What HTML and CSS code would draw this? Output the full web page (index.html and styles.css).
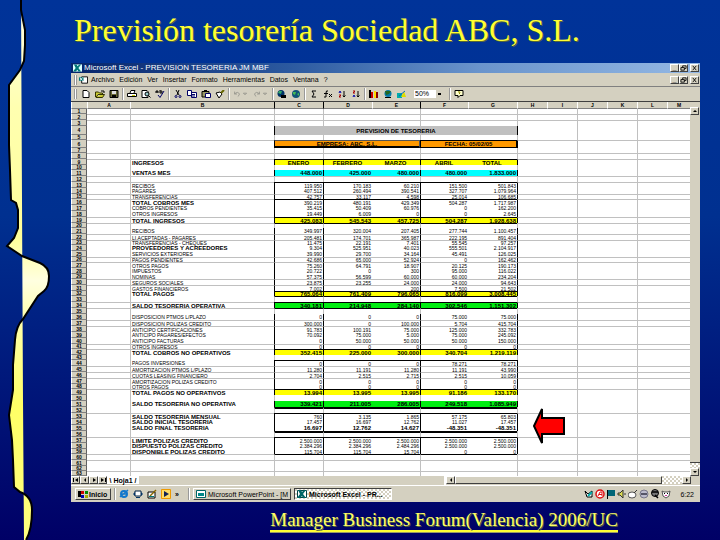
FILE: index.html
```
<!DOCTYPE html>
<html lang="es">
<head>
    <meta charset="UTF-8">
    <meta name="viewport" content="width=device-width, initial-scale=1.0">
    <title>Previsión tesorería Sociedad ABC, S.L.</title>
    <link rel="stylesheet" href="styles.css">
</head>
<body>
    <svg class="ribbon" viewBox="0 0 56 540" preserveAspectRatio="none" aria-hidden="true">
        <defs>
            <linearGradient id="ribbonFill" x1="0" y1="0" x2="0" y2="1">
                <stop offset="0" stop-color="#ffffe8"/>
                <stop offset="0.2" stop-color="#ffffb0"/>
                <stop offset="0.44" stop-color="#ffff99"/>
                <stop offset="0.52" stop-color="#ffffe0"/>
                <stop offset="0.6" stop-color="#ffffa8"/>
                <stop offset="0.75" stop-color="#ffff66"/>
                <stop offset="1" stop-color="#ffff80"/>
            </linearGradient>
        </defs>
        <path fill="url(#ribbonFill)" d="M21 0V10L25 30L25 45L24 61L20 70L9 85V145L10 170L11 200L16 203L18 210L18 228L14 238L7 246L22 256L40 263Q49 267 49 276Q49 287 44 291L38 296L23 319Q16 326 15 340L13 365V390L9 415L12 440L13 460L14 487L20 492Q32 496 32 510Q32 530 26 540H24L23 400L22 200Z"/>
        <path fill="none" stroke="#000" stroke-width="2" d="M21 0V10L25 30L25 45L24 61L20 70L9 85V145L10 170L11 200L16 203L18 210L18 228L14 238L7 246L22 256L40 263Q49 267 49 276Q49 287 44 291L38 296L23 319Q16 326 15 340L13 365V390L9 415L12 440L13 460L14 487L20 492Q32 496 32 510Q32 530 26 540"/>
    </svg>

    <main class="slide">
        <h1>Previsión tesorería Sociedad ABC, S.L.</h1>

        <div class="window">
            <div class="title-bar">
                <svg class="app-icon" viewBox="0 0 10 8"><path fill="#dff" d="M0 0h10v8H0z"/><path fill="#077" d="M1 0h3l1 2 2-2h2L6 4l3 4H6L5 6 3 8H0l3-4z"/></svg>
                <span class="title-text">Microsoft Excel - PREVISION TESORERIA JM MBF</span>
                <div class="win-buttons">
                    <button aria-label="Minimizar">_</button>
                    <button aria-label="Restaurar"><svg viewBox="0 0 8 7"><path class="line" d="M3 3V1h4v3H5M1 3h4v3H1z"/></svg></button>
                    <button aria-label="Cerrar"><svg viewBox="0 0 8 7"><path class="line" d="M2 1l4 5M6 1L2 6"/></svg></button>
                </div>
            </div>

            <div class="menu-bar">
                <span class="grip"></span>
                <svg class="app-icon" viewBox="0 0 10 8"><path fill="#fff" stroke="#000" d="M3 .5h6.500v7H3z"/><path fill="#077" d="M0 1h5v4H0z"/><path stroke="#fff" d="M1 1.500l3 3M4 1.500l-3 3"/></svg>
                <button>Archivo</button>
                <button>Edición</button>
                <button>Ver</button>
                <button>Insertar</button>
                <button>Formato</button>
                <button>Herramientas</button>
                <button>Datos</button>
                <button>Ventana</button>
                <button>?</button>
                <div class="win-buttons">
                    <button aria-label="Minimizar libro">_</button>
                    <button aria-label="Restaurar libro"><svg viewBox="0 0 8 7"><path class="line" d="M3 3V1h4v3H5M1 3h4v3H1z"/></svg></button>
                    <button aria-label="Cerrar libro"><svg viewBox="0 0 8 7"><path class="line" d="M2 1l4 5M6 1L2 6"/></svg></button>
                </div>
            </div>

            <div class="toolbar">
                <span class="grip"></span>
                <button aria-label="Nuevo"><svg viewBox="0 0 10 8"><path fill="#fff" stroke="#000" d="M2 .5h4l2 2v5H2z"/></svg></button>
                <button aria-label="Abrir"><svg viewBox="0 0 10 8"><path fill="#cc3" stroke="#330" d="M.5 7V2h3l1 1h3v1.500H3L1 7.500h6.500l2-3H7"/><path class="line" d="M6 1h3v2"/></svg></button>
                <button aria-label="Guardar"><svg viewBox="0 0 10 8"><path fill="#663" stroke="#000" d="M1 .5h8v7H1z"/><path fill="#ddd" d="M3 1h4v3H3z"/><path fill="#000" d="M3 5h4v2H3z"/></svg></button>
                <span class="divider"></span>
                <button aria-label="Imprimir"><svg viewBox="0 0 10 8"><path fill="#fff" stroke="#000" d="M3 3l1-2.500h4L7 3M.5 3.500h9v3h-9z"/><path stroke="#cc0" d="M5 5.500h3"/></svg></button>
                <button aria-label="Vista preliminar"><svg viewBox="0 0 10 8"><path fill="#fff" stroke="#000" d="M1 .5h5l1 1v6H1z"/><circle cx="6" cy="4" r="2" fill="#9cc" stroke="#000"/><path class="line" d="M7.500 5.500l2 2"/></svg></button>
                <button aria-label="Ortografía"><svg viewBox="0 0 10 8"><path class="line" d="M1 3V1h2v2M1 2h2M5 0v3h2V1H5"/><path fill="none" stroke="#006" d="M3 5l2 2.500L9 1"/></svg></button>
                <span class="divider"></span>
                <button aria-label="Cortar"><svg viewBox="0 0 10 8"><path class="line" d="M3 0l3 5M6 0L4 5"/><circle cx="3" cy="6.500" r="1" fill="none" stroke="#006"/><circle cx="7" cy="6.500" r="1" fill="none" stroke="#006"/></svg></button>
                <button aria-label="Copiar"><svg viewBox="0 0 10 8"><path fill="#fff" stroke="#006" d="M.5.5h4v5h-4zM4.500 2.500h5v5h-5z"/><path stroke="#006" d="M5 4.500h3M5 6h3"/></svg></button>
                <button aria-label="Pegar"><svg viewBox="0 0 10 8"><path fill="#996" stroke="#000" d="M1 1.500h7v5.500H1z"/><path fill="#fff" stroke="#006" d="M4.500 3.500h5v4h-5z"/><path stroke="#000" d="M3 .5h3"/></svg></button>
                <button aria-label="Copiar formato"><svg viewBox="0 0 10 8"><path fill="#fff" stroke="#000" d="M1 3l4-1 2 2-3 4z"/><path stroke="#660" stroke-width="2" d="M6 3l3-3"/></svg></button>
                <span class="divider"></span>
                <button class="wide" disabled aria-label="Deshacer"><svg viewBox="0 0 20 8"><path class="off" d="M2 1v3h3M2 4q4-4 6 0q0 2-2 3M13 3h4l-2 2z"/></svg></button>
                <button class="wide" disabled aria-label="Rehacer"><svg viewBox="0 0 20 8"><path class="off" d="M8 1v3H5M8 4Q4 0 2 4q0 2 2 3M13 3h4l-2 2z"/></svg></button>
                <span class="divider"></span>
                <button aria-label="Hipervínculo"><svg viewBox="0 0 10 8"><circle cx="4" cy="3.500" r="3.500" fill="#036"/><path fill="#3a6" d="M2 1h3L4 4 1 3z"/><path fill="#000" d="M4 5h5v3H4z"/></svg></button>
                <button aria-label="Web"><svg viewBox="0 0 10 8"><circle cx="5" cy="4" r="4" fill="#157"/><path fill="#4b5" d="M2 2h3L4 5 2 4zM6 4l2-1v3z"/></svg></button>
                <span class="divider"></span>
                <button aria-label="Autosuma"><svg viewBox="0 0 10 8"><path class="line" d="M7 1H3l2 3-2 3h4"/></svg></button>
                <button aria-label="Pegar función"><svg viewBox="0 0 10 8"><path class="line" d="M5 1Q3 0 3 3v4H1M1 3.500h4M6 4l3 3M9 4L6 7"/></svg></button>
                <button aria-label="Orden ascendente"><svg viewBox="0 0 10 8"><path stroke="#00a" fill="none" d="M2 3l1-2 1 2"/><path stroke="#a00" fill="none" d="M2 5h2L2 7h2"/><path class="line" d="M7 1v6M6 5.500l1 1.500 1.500-1.500"/></svg></button>
                <button aria-label="Orden descendente"><svg viewBox="0 0 10 8"><path stroke="#a00" fill="none" d="M2 1h2L2 3h2"/><path stroke="#00a" fill="none" d="M2 7l1-2 1 2"/><path class="line" d="M7 1v6M6 5.500l1 1.500 1.500-1.500"/></svg></button>
                <span class="divider"></span>
                <button aria-label="Gráficos"><svg viewBox="0 0 10 8"><path fill="#000" d="M0 0h2v8H0z"/><path fill="#c00" d="M2 2h2v6H2z"/><path fill="#fd0" d="M5 1h2v7H5z"/><path fill="#800" d="M7 2h2v6H7z"/></svg></button>
                <button aria-label="Mapa"><svg viewBox="0 0 10 8"><circle cx="5" cy="3.500" r="3.500" fill="#07a"/><path fill="#262" d="M2 1h6L6 4 3 5z"/><path stroke="#000" d="M2 7.500h6"/></svg></button>
                <button aria-label="Dibujo"><svg viewBox="0 0 10 8"><path fill="#0aa" d="M0 3h5v5H0z"/><path fill="#dd0" d="M4 7l3-6 2 6z"/><path stroke="#06c" d="M2 6l6-5"/></svg></button>
                <select aria-label="Zoom">
                    <option>50%</option>
                </select>
                <span class="divider"></span>
                <button aria-label="Ayuda"><svg viewBox="0 0 10 8"><path fill="#ffc" stroke="#000" d="M1 .5h8v5H6L4 7.500V5.500H1z"/><path stroke="#880" fill="none" d="M4 2q2-1 2 1L5 4"/></svg></button>
            </div>

            <div class="sheet">
                <table>
                    <colgroup>
                        <col class="col-head">
                        <col class="col-a">
                        <col class="col-b">
                        <col class="col-num" span="2">
                        <col class="col-mid" span="2">
                        <col class="col-num">
                        <col class="col-empty" span="5">
                        <col>
                    </colgroup>
                    <thead id="columns"></thead>
                    <tbody id="rows"></tbody>
                </table>
                <div class="scroll-v">
                    <button aria-label="Subir"><svg viewBox="0 0 8 6"><path d="M4 2l2 2H2z"/></svg></button>
                    <div class="track"></div>
                    <div class="checker"></div>
                    <button aria-label="Bajar"><svg viewBox="0 0 8 6"><path d="M4 4L2 2h4z"/></svg></button>
                </div>
                <svg class="arrow" viewBox="0 0 34 40"><path fill="#f00" stroke="#000" stroke-width="2" d="M2 20L10 3V12H32V28H10V37z"/></svg>
            </div>

            <div class="tabs">
                <button aria-label="Primera hoja"><svg viewBox="0 0 8 6"><path d="M1 1h1v4H1zM6 1v4L3 3z"/></svg></button>
                <button aria-label="Hoja anterior"><svg viewBox="0 0 8 6"><path d="M5 1v4L3 3z"/></svg></button>
                <button aria-label="Hoja siguiente"><svg viewBox="0 0 8 6"><path d="M3 1v4l3-2z"/></svg></button>
                <button aria-label="Última hoja"><svg viewBox="0 0 8 6"><path d="M6 1h1v4H6zM2 1v4l3-2z"/></svg></button>
                <button class="tab">\ Hoja1 /</button>
                <div class="scroll-h">
                    <button aria-label="Izquierda"><svg viewBox="0 0 8 6"><path d="M5 1v4L3 3z"/></svg></button>
                    <div class="thumb"></div>
                    <div class="checker"></div>
                    <button aria-label="Derecha"><svg viewBox="0 0 8 6"><path d="M3 1v4l2-2z"/></svg></button>
                </div>
            </div>

            <div class="taskbar">
                <button class="start"><svg viewBox="0 0 10 8"><path d="M0 1h3v6H0z"/><path fill="#c00" d="M3 1h3v3H3z"/><path fill="#080" d="M7 1h3v3H7z"/><path fill="#00a" d="M3 5h3v3H3z"/><path fill="#aa0" d="M7 5h3v3H7z"/></svg>Inicio</button>
                <span class="divider"></span>
                <div class="quick">
                    <svg viewBox="0 0 10 10"><circle cx="5" cy="5" r="3" fill="none" stroke="#17c" stroke-width="2"/><path stroke="#17c" stroke-width="1.500" d="M3 5h5M1 8L9 1"/></svg>
                    <svg viewBox="0 0 10 10"><path fill="#fff" stroke="#024" d="M2 2h6v5H2z"/><path fill="#036" d="M0 5l2-2v4zM10 5L8 3v4zM3 8h4v1H3z"/></svg>
                    <svg viewBox="0 0 10 10"><path fill="#fff" stroke="#000" d="M1 3h7v6H1z"/><path stroke="#860" stroke-width="1.500" d="M3 7l6-6"/><path stroke="#077" d="M2 7.500h5"/></svg>
                    <svg viewBox="0 0 10 10"><path fill="#fd6" stroke="#e90" d="M.5.5h9v9h-9z"/><path fill="#125" d="M3 2l5 3-5 3z"/></svg>
                    <span>»</span>
                </div>
                <span class="divider"></span>
                <button class="task"><svg viewBox="0 0 10 8"><path fill="#fff" stroke="#066" d="M.5.5h9v7h-9z"/><path fill="#088" d="M2 3h6v3H2z"/></svg>Microsoft PowerPoint - [M</button>
                <button class="task active"><svg viewBox="0 0 10 8"><path fill="#fff" stroke="#044" d="M.5.5h9v7h-9z"/><path fill="#066" d="M1 0h3l1 2 2-2h2L6 4l3 4H6L5 6 3 8H0l3-4z"/></svg>Microsoft Excel - PR...</button>
                <div class="tray">
                    <svg viewBox="0 0 10 10"><path fill="#fff" stroke="#000" d="M1 2l3 3 4-3v6H3z"/><path stroke="#0aa" stroke-width="2" d="M4 7l4-4"/></svg>
                    <svg viewBox="0 0 10 10"><circle cx="5" cy="5" r="4" fill="#fff" stroke="#d11" stroke-width="1.500"/><path fill="none" stroke="#d11" d="M3 7l2-4h2v4M4 5.500h3"/></svg>
                    <svg viewBox="0 0 10 10"><path fill="#067" d="M2 1h7v6H2z"/><path stroke="#000" d="M1.500 1v9"/></svg>
                    <svg viewBox="0 0 10 10"><path fill="#dd5" stroke="#333" d="M1 4h2l3-3v8L3 6H1z"/><path stroke="#333" d="M8 4v2"/></svg>
                    <svg viewBox="0 0 10 10"><ellipse cx="4" cy="6" rx="4" ry="3" fill="#fff" stroke="#555"/><path stroke="#333" d="M6 4l3-3"/></svg>
                    <svg viewBox="0 0 10 10"><circle cx="5" cy="5" r="4" fill="#bbc" stroke="#778"/><path stroke="#556" stroke-width="2" d="M2 5h6"/></svg>
                    <svg viewBox="0 0 10 10"><circle cx="5" cy="4" r="3.500" fill="#777" stroke="#000"/><path stroke="#000" stroke-width="1.500" d="M2 3h6M5 6l3 3"/></svg>
                    <svg viewBox="0 0 10 10"><path fill="#fff" stroke="#555" d="M1 2l2 1h4l2-1-1 5-3 2-3-2z"/><path fill="#000" d="M3 4h1v1H3zM6 4h1v1H6z"/><path fill="#c39" d="M4 6h2v1H4z"/></svg>
                    <span class="clock">6:22</span>
                </div>
            </div>
        </div>

        <footer><span>Manager Business Forum(Valencia) 2006/UC</span></footer>
    </main>

    <script src="script.js"></script>
</body>
</html>
```
FILE: styles.css
```
* {
    margin: 0;
    padding: 0;
    box-sizing: border-box;
}

body {
    position: relative;
    min-height: 100vh;
    background: linear-gradient(#003399, #003090 40%, #000066);
    font-family: "Liberation Sans", Arial, sans-serif;
    font-size: 7px;
    color: #000;
}

.ribbon {
    position: absolute;
    top: 0;
    left: 0;
    width: 56px;
    height: 100%;
}

.slide {
    padding: 12px 20px 0 71px;
}

h1 {
    margin: 0 0 14px 3px;
    font-family: "Liberation Serif", "Times New Roman", serif;
    font-size: 32px;
    font-weight: normal;
    line-height: 37px;
    color: #ffff33;
    text-shadow: 1px 1px 0 #55663a;
}

button,
select {
    border: 0;
    border-radius: 0;
    background: none;
    font-family: inherit;
    font-size: 7px;
    color: inherit;
    white-space: nowrap;
}

svg {
    display: block;
}

.line {
    fill: none;
    stroke: #000;
}

.off {
    fill: none;
    stroke: #8f8f88;
}

/* Excel window */
.window {
    background: #d4d0c0;
}

.title-bar {
    display: flex;
    align-items: center;
    height: 10px;
    padding: 0 1px 0 2px;
    background: linear-gradient(to right, #06246b, #2c5aa0 35%, #6a94cc 65%, #94b8e4);
    color: #fff;
}

.title-text {
    margin-left: 2px;
    font-size: 8px;
    line-height: 10px;
}

.app-icon {
    width: 9px;
    height: 8px;
    flex: none;
}

.win-buttons {
    display: flex;
    margin-left: auto;
}

.win-buttons button {
    display: flex;
    align-items: center;
    justify-content: center;
    width: 9px;
    height: 8px;
    background: #d4d0c0;
    border: 1px solid;
    border-color: #fff #404040 #404040 #fff;
    font-weight: bold;
    line-height: 4px;
    color: #000;
}

.win-buttons button:last-child {
    margin-left: 2px;
}

.win-buttons svg {
    width: 7px;
    height: 6px;
}

.menu-bar {
    display: flex;
    align-items: center;
    gap: 5px;
    height: 14px;
    padding: 0 1px 0 3px;
    border-bottom: 1px solid #808080;
}

.menu-bar .app-icon {
    margin: 0 -2px 0 -3px;
}

.grip {
    width: 3px;
    height: 10px;
    border: 1px solid #999;
    border-width: 0 1px;
    background: #fff;
    flex: none;
}

.toolbar {
    display: flex;
    align-items: center;
    gap: 4px;
    height: 15px;
    padding-left: 3px;
    border-bottom: 1px solid #404040;
}

.toolbar button,
.toolbar svg {
    width: 10px;
    height: 8px;
    flex: none;
}

.toolbar .wide,
.toolbar .wide svg {
    width: 16px;
}

.divider {
    width: 2px;
    height: 12px;
    border-left: 1px solid #999;
    border-right: 1px solid #fff;
    flex: none;
}

.toolbar .divider {
    margin: 0 -1px;
}

.toolbar select {
    width: 28px;
    height: 8px;
    margin: 0 4px 0 3px;
    padding-left: 1px;
    appearance: none;
    background: linear-gradient(#000, #000) 24px 3px / 3px 2px no-repeat, linear-gradient(to right, #fff 22px, #d4d0c0 22px);
    line-height: 8px;
}

/* Sheet */
.sheet {
    position: relative;
    display: flex;
}

table {
    flex: 1;
    width: 0;
    table-layout: fixed;
    border-collapse: separate;
    border-spacing: 0;
    background: #fff;
    font-size: 5px;
    line-height: 4px;
}

.col-head {
    width: 16px;
}

.col-a {
    width: 43px;
}

.col-b {
    width: 144px;
}

.col-num {
    width: 49px;
}

.col-mid {
    width: 48px;
}

.col-empty {
    width: 30px;
}

tr {
    height: 6px;
}

tr.short {
    height: 5px;
}

tr.title {
    height: 9px;
}

tr.company {
    height: 8px;
}

th {
    background: #d4d0c0;
    border-left: 1px solid #fff;
    font-weight: bold;
    text-align: center;
    white-space: nowrap;
}

thead tr {
    height: 7px;
}

thead th {
    border-bottom: 1px solid #808080;
}

thead .picked {
    border-left-color: #000;
}

tbody th {
    border-bottom: 1px solid #808080;
    border-right: 1px solid #606060;
}

td {
    vertical-align: middle;
    text-align: right;
    white-space: nowrap;
}

.lined td {
    border-top: 1px solid #c0c0c0;
}

td.edge {
    border-left: 1px solid #c0c0c0;
}

td.label {
    padding-left: 1px;
    text-align: left;
}

td.num {
    padding-right: 1px;
}

.boxed .rule {
    border-left-color: #000;
}

.topped .num {
    border-top: 1px solid #000;
}

.thick .num {
    border-top: 2px solid #000;
}

.bold td,
.bold-label .label {
    font-size: 6px;
    font-weight: bold;
}

.yellow .num {
    background: #ffff00;
}

.cyan .num {
    background: #00ffff;
}

.green .num {
    background: #00ee11;
}

.months .num {
    text-align: center;
}

td.heading {
    background: #c0c0c0;
    text-align: center;
}

td.orange {
    background: #ff9900;
    border: 1px solid #000;
    text-align: center;
}

td.chosen {
    border: 1px solid #555;
    border-bottom: 2px solid #000;
}

.arrow {
    position: absolute;
    left: 461px;
    top: 304px;
    width: 34px;
    height: 40px;
}

/* Scroll bars and tabs */
.scroll-v {
    display: flex;
    flex-direction: column;
    width: 10px;
    padding-top: 5px;
}

.scroll-v button,
.scroll-h button,
.tabs > button {
    display: flex;
    align-items: center;
    justify-content: center;
    width: 9px;
    height: 8px;
    background: #d4d0c0;
    border: 1px solid;
    border-color: #fff #404040 #404040 #fff;
    flex: none;
}

.scroll-v svg,
.scroll-h svg,
.tabs svg {
    width: 8px;
    height: 6px;
    flex: none;
}

.track {
    flex: 1;
}

.checker {
    background: repeating-conic-gradient(#fff 0 25%, #d4d0c0 0 50%) 0 0 / 4px 4px;
}

.scroll-v .checker {
    height: 6px;
    border-top: 1px solid #404040;
}

.tabs {
    display: flex;
    height: 10px;
    border-bottom: 1px solid #fff;
}

.tabs .tab {
    width: 32px;
    background: #fff;
    border: 0;
    font-weight: bold;
}

.scroll-h {
    display: flex;
    width: 247px;
    margin: 0 9px 0 auto;
    border-left: 2px solid #fff;
}

.thumb {
    flex: 1;
    height: 8px;
    border: 1px solid;
    border-color: #fff #404040 #404040 #fff;
}

.scroll-h .checker {
    width: 20px;
    height: 8px;
}

/* Taskbar */
.taskbar {
    display: flex;
    align-items: center;
    gap: 3px;
    height: 16px;
    padding: 0 6px 0 4px;
}

.taskbar button {
    display: flex;
    align-items: center;
    gap: 2px;
    height: 12px;
    padding: 0 2px;
    border: 1px solid;
    border-color: #fff #404040 #404040 #fff;
    overflow: hidden;
}

.taskbar button svg {
    width: 10px;
    height: 8px;
    flex: none;
}

.taskbar .start {
    width: 36px;
    font-weight: bold;
    gap: 1px;
}

.quick {
    display: flex;
    align-items: center;
    gap: 4px;
    width: 66px;
    font-weight: bold;
}

.quick svg,
.tray svg {
    width: 10px;
    height: 10px;
    flex: none;
}

.taskbar .task {
    width: 98px;
}

.taskbar .active {
    border-color: #404040 #fff #fff #404040;
    background: repeating-conic-gradient(#fff 0 25%, #d4d0c0 0 50%) 0 0 / 4px 4px;
    font-weight: bold;
}

.tray {
    display: flex;
    align-items: center;
    gap: 1px;
    margin-left: auto;
}

.clock {
    margin-left: 8px;
}

footer {
    margin-top: 8px;
    padding-right: 82px;
    text-align: right;
    font-family: "Liberation Serif", "Times New Roman", serif;
    font-size: 19px;
    line-height: 20px;
    color: #ffff66;
    text-shadow: 1px 1px 0 #55663a;
}

footer span {
    display: inline-block;
    border-bottom: 2px solid #ffff33;
    box-shadow: 0 1px 0 #999966;
}
```
FILE: script.js
```
const columns = ['', 'A', 'B', 'C', 'D', 'E', 'F', 'G', 'H', 'I', 'J', 'K', 'L', 'M'];

// row number: [classes, label, values of C to G]
const data = {
    9: ['bold yellow months boxed topped', 'INGRESOS', 'ENERO', 'FEBRERO', 'MARZO', 'ABRIL', 'TOTAL'],
    11: ['bold cyan boxed', 'VENTAS MES', '448.000', '425.000', '480.000', '480.000', '1.833.000'],
    13: ['boxed topped', 'RECIBOS', '119.950', '170.183', '60.210', '151.500', '501.843'],
    14: ['boxed', 'PAGARES', '407.512', '260.494', '390.541', '327.707', '1.079.964'],
    15: ['boxed', 'TRANSFERENCIAS', '42.757', '33.117', '4.598', '25.014', '106.685'],
    16: ['boxed topped bold-label', 'TOTAL COBROS MES', '390.219', '480.191', '429.349', '504.287', '1.717.987'],
    17: ['boxed', 'COBROS PENDIENTES', '35.415', '50.409', '60.976', '0', '162.200'],
    18: ['boxed', 'OTROS INGRESOS', '19.449', '6.009', '0', '0', '2.645'],
    19: ['bold yellow boxed topped', 'TOTAL INGRESOS', '425.083', '545.543', '457.725', '504.287', '1.928.638'],
    20: ['topped', ''],
    21: ['boxed', 'RECIBOS', '349.997', '320.004', '207.405', '277.744', '1.100.457'],
    22: ['boxed', 'LI.ACEPTADAS - PAGARES', '205.481', '174.701', '365.987', '222.195', '891.404'],
    23: ['boxed', 'TRANSFERENCIAS - CHEQUES', '11.475', '22.191', '7.401', '55.545', '97.257'],
    24: ['boxed bold-label', 'PROVEEDORES Y ACREEDORES', '9.304', '525.951', '40.023', '555.501', '2.104.917'],
    25: ['boxed', 'SERVICIOS EXTERIORES', '39.990', '29.700', '34.164', '45.491', '126.025'],
    26: ['boxed', 'PAGOS PENDIENTES', '42.686', '65.000', '52.924', '0', '162.462'],
    27: ['boxed', 'OTROS PAGOS', '75.260', '64.791', '18.907', '20.125', '190.173'],
    28: ['boxed', 'IMPUESTOS', '20.722', '0', '300', '95.000', '116.022'],
    29: ['boxed', 'NOMINAS', '57.375', '56.599', '60.000', '60.000', '234.204'],
    30: ['boxed', 'SEGUROS SOCIALES', '23.875', '23.255', '24.000', '24.000', '94.643'],
    31: ['boxed', 'GASTOS FINANCIEROS', '7.002', '', '200', '7.500', '21.502'],
    32: ['bold yellow boxed topped', 'TOTAL PAGOS', '765.064', '761.409', '796.065', '816.099', '3.008.445'],
    33: ['topped', ''],
    34: ['bold green boxed topped', 'SALDO TESORERIA OPERATIVA', '340.181', '214.948', '284.140', '302.546', '1.151.302'],
    35: ['topped', ''],
    36: ['boxed', 'DISPOSICION PTMOS L/PLAZO', '0', '0', '0', '75.000', '75.000'],
    37: ['boxed', 'DISPOSICION POLIZAS CREDITO', '300.000', '0', '100.000', '5.704', '415.704'],
    38: ['boxed', 'ANTICIPO CERTIFICACIONES', '91.783', '100.191', '75.000', '125.000', '332.783'],
    39: ['boxed', 'ANTICIPO PAGARES/EFECTOS', '70.092', '75.000', '5.000', '75.000', '245.092'],
    40: ['boxed', 'ANTICIPO FACTURAS', '0', '50.000', '50.000', '50.000', '150.000'],
    41: ['boxed', 'OTROS INGRESOS', '0', '0', '0', '0', '0'],
    42: ['bold yellow boxed topped', 'TOTAL COBROS NO OPERATIVOS', '352.415', '225.000', '300.000', '340.704', '1.219.119'],
    44: ['boxed topped', 'PAGOS INVERSIONES', '0', '0', '0', '78.271', '78.271'],
    45: ['boxed', 'AMORTIZACION PTMOS L/PLAZO', '11.280', '11.191', '11.280', '11.191', '43.990'],
    46: ['boxed', 'CUOTAS LEASING FINANCIERO', '2.704', '2.515', '2.715', '2.515', '10.059'],
    47: ['boxed', 'AMORTIZACION POLIZAS CREDITO', '0', '0', '0', '0', '0'],
    48: ['boxed', 'OTROS PAGOS', '0', '0', '0', '0', '0'],
    49: ['bold yellow boxed topped', 'TOTAL PAGOS NO OPERATIVOS', '13.994', '13.995', '13.995', '91.186', '133.170'],
    51: ['bold green boxed', 'SALDO TESORERIA NO OPERATIVA', '339.421', '211.005', '286.005', '249.518', '1.085.949'],
    52: ['thick', ''],
    53: ['boxed topped bold-label', 'SALDO TESORERIA MENSUAL', '760', '3.135', '1.865', '57.175', '65.803'],
    54: ['boxed bold-label', 'SALDO INICIAL TESORERIA', '17.457', '16.697', '12.762', '11.027', '17.457'],
    55: ['bold boxed', 'SALDO FINAL TESORERIA', '16.697', '12.762', '14.627', '-48.351', '-48.351'],
    56: ['thick', ''],
    57: ['boxed topped bold-label', 'LIMITE POLIZAS CREDITO', '2.500.000', '2.500.000', '2.500.000', '2.500.000', '2.500.000'],
    58: ['boxed bold-label', 'DISPUESTO POLIZAS CREDITO', '2.384.296', '2.384.296', '2.484.296', '2.500.000', '2.500.000'],
    59: ['boxed bold-label', 'DISPONIBLE POLIZAS CREDITO', '115.704', '115.704', '15.704', '0', '0'],
    60: ['topped', '']
};

const shortRows = [1, 5, 7, 10, 15, 20, 23, 26, 29, 32, 41, 43, 48, 59, 62, 63];
const linedRows = [2, 3, 6, 8, 9, 12, 13, 15, 16, 19, 20, 22, 23, 26, 27, 30, 31, 34, 35, 37, 38, 41, 42, 45, 46, 47, 49, 53, 57, 60, 61, 63];

// Grid lines on the left side of these columns
const edges = ['B', 'C', 'D', 'F', 'H', 'J', 'L'];
const rules = ['C', 'D', 'F', 'H'];

function addCell(tr, column, text, extra) {
    const td = tr.insertCell();
    td.textContent = text || '';
    if (edges.includes(column)) td.classList.add('edge');
    if (rules.includes(column)) td.classList.add('rule');
    if (column === 'B') td.classList.add('label');
    if (extra) td.classList.add(...extra.split(' '));
    return td;
}

const head = document.getElementById('columns').insertRow();
columns.forEach(function(name) {
    const th = document.createElement('th');
    th.textContent = name;
    if (['C', 'D', 'F'].includes(name)) th.className = 'picked';
    head.appendChild(th);
});

const body = document.getElementById('rows');
for (let n = 1; n <= 63; n++) {
    const tr = body.insertRow();
    const row = data[n] || ['', ''];
    tr.className = row[0];
    if (shortRows.includes(n)) tr.classList.add('short');
    if (linedRows.includes(n)) tr.classList.add('lined');

    const th = document.createElement('th');
    th.textContent = n;
    tr.appendChild(th);

    addCell(tr, 'A');
    addCell(tr, 'B', row[1]);
    if (n === 4) {
        tr.classList.add('title', 'bold', 'boxed');
        addCell(tr, 'C', 'PREVISION DE TESORERIA', 'heading').colSpan = 5;
    } else if (n === 6) {
        tr.classList.add('company', 'bold', 'boxed');
        addCell(tr, 'C', 'EMPRESA: ABC, S.L.', 'orange chosen').colSpan = 3;
        addCell(tr, 'F', 'FECHA: 05/02/05', 'orange').colSpan = 2;
    } else {
        for (let i = 3; i <= 7; i++) {
            addCell(tr, columns[i], row[i - 1], 'num');
        }
    }
    for (let i = 8; i <= 13; i++) {
        addCell(tr, columns[i]);
    }
}
```
